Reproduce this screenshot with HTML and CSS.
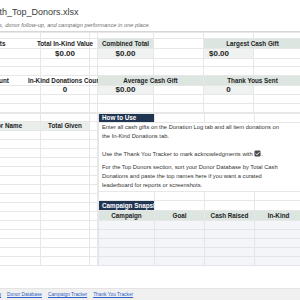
FILE: index.html
```html
<!DOCTYPE html>
<html lang="en">
<head>
    <meta charset="UTF-8">
    <title>Donation_Log_with_Top_Donors.xlsx</title>
    <link rel="stylesheet" href="styles.css">
</head>
<body>
    <div class="sheet">

        <!-- File header -->
        <header class="file-head">
            <h1 class="file-name">Donation_Log_with_Top_Donors.xlsx</h1>
            <p class="file-note">Track gifts, in-kind donations, donor follow-up, and campaign performance in one place.</p>
        </header>

        <!-- Summary numbers -->
        <table class="grid kpis">
            <colgroup>
                <col class="c-rank"><col class="c-name"><col class="c-total"><col class="c-gap">
                <col class="c-d"><col class="c-e"><col class="c-f"><col class="c-g">
            </colgroup>
            <tr class="h6"><td></td><td></td><td></td><td></td><td></td><td></td><td></td><td></td></tr>
            <tr class="h10">
                <td colspan="2" class="label"><div>Total Cash Gifts</div></td>
                <td class="label"><div>Total In-Kind Value</div></td>
                <td></td>
                <td class="label shade"><div>Combined Total</div></td>
                <td></td>
                <td colspan="2" class="label shade"><div>Largest Cash Gift</div></td>
            </tr>
            <tr class="h10">
                <td colspan="2" class="value"><div>$0.00</div></td>
                <td class="value"><div>$0.00</div></td>
                <td></td>
                <td class="value tint"><div>$0.00</div></td>
                <td></td>
                <td class="value tint left"><div>$0.00</div></td>
                <td></td>
            </tr>
            <tr class="h8"><td></td><td></td><td></td><td></td><td></td><td></td><td></td><td></td></tr>
            <tr class="h9"><td></td><td></td><td></td><td></td><td></td><td></td><td></td><td></td></tr>
            <tr class="h10">
                <td colspan="2" class="label"><div>Total Donor Count</div></td>
                <td class="label"><div>In-Kind Donations Count</div></td>
                <td></td>
                <td colspan="2" class="label shade"><div>Average Cash Gift</div></td>
                <td colspan="2" class="label shade"><div>Thank Yous Sent</div></td>
            </tr>
            <tr class="h9">
                <td colspan="2" class="value"><div>0</div></td>
                <td class="value"><div>0</div></td>
                <td></td>
                <td class="value tint"><div>$0.00</div></td>
                <td></td>
                <td class="value tint"><div>0</div></td>
                <td></td>
            </tr>
            <tr class="h9"><td></td><td></td><td></td><td></td><td></td><td></td><td></td><td></td></tr>
            <tr class="h9"><td></td><td></td><td></td><td></td><td></td><td></td><td></td><td></td></tr>
        </table>

        <div class="lower">
            <!-- Top donors leaderboard -->
            <table class="grid board">
                <colgroup>
                    <col class="c-rank"><col class="c-name"><col class="c-total"><col class="c-gap">
                </colgroup>
                <tr class="h8"><td></td><td></td><td></td><td></td></tr>
                <tr class="h9">
                    <td class="label soft"><div>Rank</div></td>
                    <td class="label soft"><div>Donor Name</div></td>
                    <td class="label soft"><div>Total Given</div></td>
                    <td></td>
                </tr>
                <tr class="h9"><td></td><td></td><td></td><td></td></tr>
                <tr class="h9"><td></td><td></td><td></td><td></td></tr>
                <tr class="h9"><td></td><td></td><td></td><td></td></tr>
                <tr class="h9"><td></td><td></td><td></td><td></td></tr>
                <tr class="h9"><td></td><td></td><td></td><td></td></tr>
                <tr class="h9"><td></td><td></td><td></td><td></td></tr>
                <tr class="h9"><td></td><td></td><td></td><td></td></tr>
                <tr class="h9"><td></td><td></td><td></td><td></td></tr>
                <tr class="h9"><td></td><td></td><td></td><td></td></tr>
                <tr class="h9"><td></td><td></td><td></td><td></td></tr>
                <tr class="h9"><td></td><td></td><td></td><td></td></tr>
                <tr class="h9"><td></td><td></td><td></td><td></td></tr>
                <tr class="h9"><td></td><td></td><td></td><td></td></tr>
                <tr class="h9"><td></td><td></td><td></td><td></td></tr>
                <tr class="h9"><td></td><td></td><td></td><td></td></tr>
            </table>

            <!-- Notes and campaign snapshot -->
            <table class="grid panel">
                <colgroup>
                    <col class="c-d"><col class="c-e"><col class="c-f"><col class="c-g">
                </colgroup>
                <tr class="h8">
                    <td class="section"><div>How to Use</div></td>
                    <td></td><td></td><td></td>
                </tr>
                <tr class="h69">
                    <td colspan="4" class="notes">
                        <p>Enter all cash gifts on the Donation Log tab and all item donations on<br>the In-Kind Donations tab.</p>
                        <p class="gap-sm">Use the Thank You Tracker to mark acknowledgments with <svg class="check" viewBox="0 0 8 8" width="7" height="7"><rect x="0.5" y="0.5" width="7" height="7" rx="1.4" fill="#4a4a4a"/><path d="M2 4.1 3.4 5.5 6.1 2.5" fill="none" stroke="#fff" stroke-width="1.1"/></svg>.</p>
                        <p>For the Top Donors section, sort your Donor Database by Total Cash<br>Donations and paste the top names here if you want a curated<br>leaderboard for reports or screenshots.</p>
                    </td>
                </tr>
                <tr class="h9"><td></td><td></td><td></td><td></td></tr>
                <tr class="h10">
                    <td class="section"><div>Campaign Snapshot</div></td>
                    <td></td><td></td><td></td>
                </tr>
                <tr class="h10">
                    <td class="label shade"><div>Campaign</div></td>
                    <td class="label shade"><div>Goal</div></td>
                    <td class="label shade"><div>Cash Raised</div></td>
                    <td class="label shade"><div>In-Kind</div></td>
                </tr>
                <tr class="h9 band"><td></td><td></td><td></td><td></td></tr>
                <tr class="h9 band"><td></td><td></td><td></td><td></td></tr>
                <tr class="h9 band"><td></td><td></td><td></td><td></td></tr>
                <tr class="h9 band"><td></td><td></td><td></td><td></td></tr>
                <tr class="h9 band"><td></td><td></td><td></td><td></td></tr>
            </table>
        </div>
    </div>

    <!-- Sheet tabs -->
    <nav class="tabs">
        <a href="#">Dashboard</a>
        <a href="#">Donation Log</a>
        <a href="#">Donor Database</a>
        <a href="#">Campaign Tracker</a>
        <a href="#">Thank You Tracker</a>
    </nav>
</body>
</html>
```

FILE: styles.css
```css
* {
    box-sizing: border-box;
}

body {
    margin: 0;
    height: 300px;
    overflow: hidden;
    display: flex;
    flex-direction: column;
    font-family: "Liberation Sans", Arial, sans-serif;
    color: #2b2b2b;
    background-color: #fff;
}

/* the view is scrolled a little to the right */
.sheet {
    margin-left: -78px;
    width: 379px;
}

.file-head {
    padding: 6px 0 2px 8px;
    border-bottom: 1px solid #d6d6d6;
}

.file-name {
    margin: 0;
    font-size: 9px;
    line-height: 12px;
    font-weight: normal;
    color: #3a3a3a;
    white-space: nowrap;
}

.file-note {
    margin: 3px 0 0;
    font-size: 5.7px;
    line-height: 8px;
    font-style: italic;
    color: #707070;
    white-space: nowrap;
}

/* spreadsheet grid */
.grid {
    border-collapse: collapse;
    table-layout: fixed;
}

.grid td {
    padding: 0;
    border: 1px solid #e7e7e7;
    white-space: nowrap;
    font-size: 6.3px;
    line-height: 8px;
}

.grid td > div {
    display: flex;
    justify-content: center;
}

.kpis {
    width: 379px;
}

.c-rank { width: 44px; }
.c-name { width: 74px; }
.c-total { width: 49px; }
.c-gap { width: 8px; }
.c-d { width: 56px; }
.c-e { width: 50px; }
.c-f { width: 50px; }
.c-g { width: 48px; }

.h6 { height: 6px; }
.h8 { height: 8px; }
.h9 { height: 9px; }
.h10 { height: 10px; }
.h69 { height: 69px; }

.label {
    font-weight: bold;
    color: #222;
}

/* shaded cells sit above text that runs over from the left */
.shade {
    position: relative;
    background-color: #dde5e1;
}

.soft {
    background-color: #e9eeeb;
}

.value {
    font-weight: bold;
    color: #222;
}

.grid .value {
    font-size: 8px;
}

.tint {
    position: relative;
    background-color: #eff2f0;
}

.grid .left > div {
    justify-content: flex-start;
    padding-left: 5px;
}

.lower {
    display: flex;
}

.board {
    width: 175px;
}

.panel {
    width: 204px;
}

.section {
    background-color: #1f3552;
    color: #fff;
    font-weight: bold;
    overflow: hidden;
}

.grid .section > div {
    justify-content: flex-start;
    padding-left: 3px;
}

.grid .notes {
    vertical-align: top;
    padding-left: 3px;
    font-size: 5.8px;
    line-height: 9px;
    color: #333;
}

.notes p {
    margin: 0 0 9px;
}

.notes p.gap-sm {
    margin-bottom: 4px;
}

.notes p:last-child {
    margin-bottom: 0;
}

.check {
    vertical-align: -1px;
}

.band td {
    background-color: #f3f5f8;
    border-color: #e2e6eb;
}

/* sheet tabs */
.tabs {
    margin-top: auto;
    margin-left: -57px;
    height: 12px;
    display: flex;
    align-items: center;
    gap: 6px;
    background-color: #f0f0f0;
    border-top: 1px solid #e4e4e4;
}

.tabs a {
    font-size: 4.8px;
    color: #2f5fc4;
    text-decoration: underline;
    white-space: nowrap;
}
```
